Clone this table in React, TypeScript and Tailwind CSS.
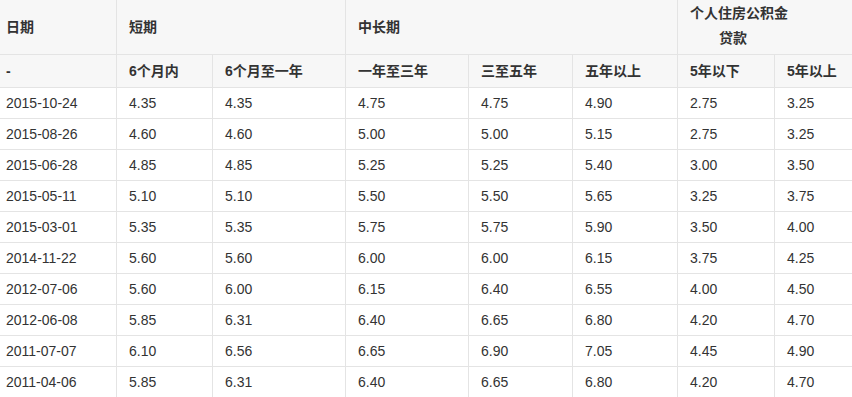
import React from "react";

const rows: string[][] = [
  ["2015-10-24", "4.35", "4.35", "4.75", "4.75", "4.90", "2.75", "3.25"],
  ["2015-08-26", "4.60", "4.60", "5.00", "5.00", "5.15", "2.75", "3.25"],
  ["2015-06-28", "4.85", "4.85", "5.25", "5.25", "5.40", "3.00", "3.50"],
  ["2015-05-11", "5.10", "5.10", "5.50", "5.50", "5.65", "3.25", "3.75"],
  ["2015-03-01", "5.35", "5.35", "5.75", "5.75", "5.90", "3.50", "4.00"],
  ["2014-11-22", "5.60", "5.60", "6.00", "6.00", "6.15", "3.75", "4.25"],
  ["2012-07-06", "5.60", "6.00", "6.15", "6.40", "6.55", "4.00", "4.50"],
  ["2012-06-08", "5.85", "6.31", "6.40", "6.65", "6.80", "4.20", "4.70"],
  ["2011-07-07", "6.10", "6.56", "6.65", "6.90", "7.05", "4.45", "4.90"],
  ["2011-04-06", "5.85", "6.31", "6.40", "6.65", "6.80", "4.20", "4.70"],
];

const sub = ["-", "6个月内", "6个月至一年", "一年至三年", "三至五年", "五年以上", "5年以下", "5年以上"];

export default function App() {
  return (
    <div
      className="w-[852px] h-[397px] overflow-hidden bg-white text-[#333] text-[14px]"
      style={{ fontFamily: '"Liberation Sans", Arial, "Noto Sans CJK SC", sans-serif' }}
    >
      <div className="grid grid-cols-[117px_96px_133px_123px_104px_105px_97px_77px]">
        {/* header row 1 */}
        <div className="h-[55px] bg-[#f7f7f7] border-r border-b border-[#e4e4e4] pl-[6px] flex items-center font-bold">
          日期
        </div>
        <div className="col-span-2 h-[55px] bg-[#f7f7f7] border-r border-b border-[#e4e4e4] pl-[12px] flex items-center font-bold">
          短期
        </div>
        <div className="col-span-3 h-[55px] bg-[#f7f7f7] border-r border-b border-[#e4e4e4] pl-[12px] flex items-center font-bold">
          中长期
        </div>
        <div className="col-span-2 h-[55px] bg-[#f7f7f7] border-b border-[#e4e4e4] pl-[12px] flex flex-col justify-center font-bold leading-[25px]">
          <div className="whitespace-nowrap -mt-[2px]">个人住房公积金</div>
          <div className="pl-[29px]">贷款</div>
        </div>
        {/* header row 2 */}
        {sub.map((s, i) => (
          <div
            key={i}
            className={`h-[33px] bg-[#f7f7f7] border-b border-[#e4e4e4] flex items-center font-bold ${
              i === 0 ? "pl-[6px]" : "pl-[12px]"
            } ${i === 7 ? "" : "border-r"}`}
          >
            {s}
          </div>
        ))}
        {/* data rows */}
        {rows.map((r, ri) =>
          r.map((c, ci) => (
            <div
              key={ri + "-" + ci}
              className={`h-[31px] border-b border-[#e4e4e4] flex items-center ${
                ci === 0 ? "pl-[6px]" : "pl-[12px]"
              } ${ci === 7 ? "" : "border-r"}`}
            >
              {c}
            </div>
          ))
        )}
      </div>
    </div>
  );
}
